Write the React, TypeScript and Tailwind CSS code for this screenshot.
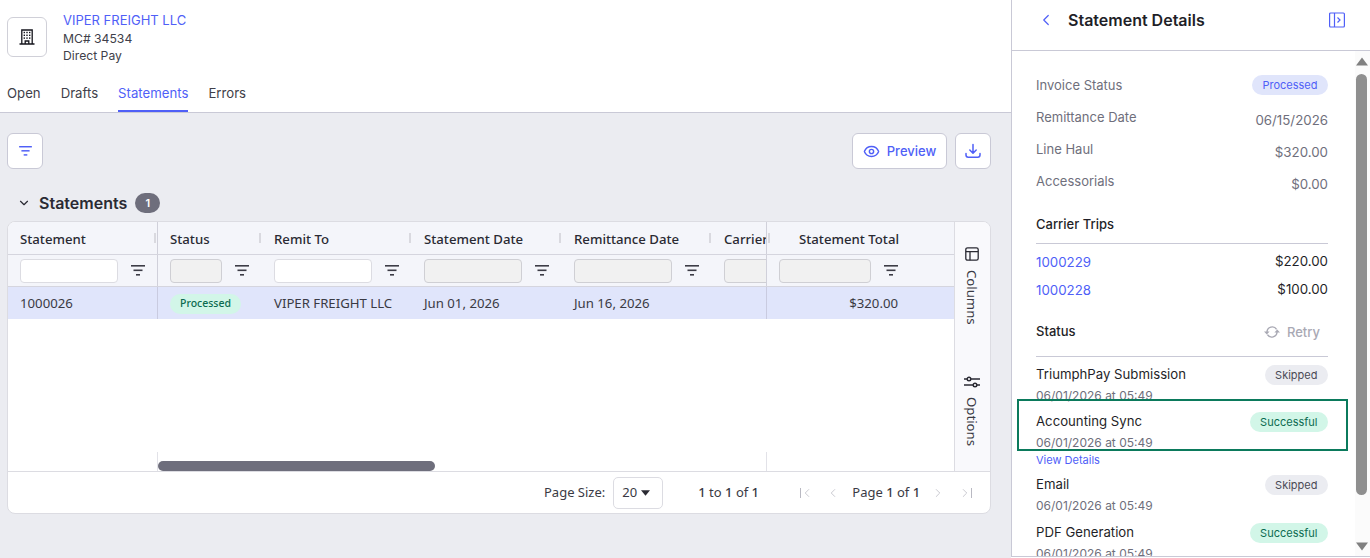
import { ChevronDown, ChevronLeft, ChevronRight, Eye } from "lucide-react";

const BLUE = "#4f5ff7";

function Lines({ color, className }: { color: string; className?: string }) {
  return (
    <svg viewBox="0 0 14 11" className={className} fill={color}>
      <rect x="0" y="0" width="14" height="1.6" />
      <rect x="2.5" y="4.5" width="9" height="1.6" />
      <rect x="5" y="9" width="4" height="1.6" />
    </svg>
  );
}

function Building() {
  return (
    <svg viewBox="0 0 16 16" className="h-[16px] w-[16px]" fill="none" stroke="#14141c" strokeWidth="1.3">
      <path d="M2.8 15V1h10.4v14" />
      <path d="M0.5 15h15" strokeWidth="1.5" />
      <path d="M6.2 15v-3h3.6v3" />
      <g fill="#14141c" stroke="none">
        <rect x="4.6" y="2.8" width="1.4" height="1.4" />
        <rect x="7.3" y="2.8" width="1.4" height="1.4" />
        <rect x="10" y="2.8" width="1.4" height="1.4" />
        <rect x="4.6" y="5.6" width="1.4" height="1.4" />
        <rect x="7.3" y="5.6" width="1.4" height="1.4" />
        <rect x="10" y="5.6" width="1.4" height="1.4" />
        <rect x="4.6" y="8.4" width="1.4" height="1.4" />
        <rect x="7.3" y="8.4" width="1.4" height="1.4" />
        <rect x="10" y="8.4" width="1.4" height="1.4" />
      </g>
    </svg>
  );
}

function HeaderCell({ w, label, pad = true }: { w: number; label: string; pad?: boolean }) {
  return (
    <div style={{ width: w }} className="relative flex h-full shrink-0 items-center whitespace-nowrap pl-[12px] pt-[4px] text-[13.2px] font-medium text-[#2a2a33]">
      {label}
      {pad && <span className="absolute right-[1px] top-[11px] h-[10px] w-[2px] bg-[#d9d9df]" />}
    </div>
  );
}

function FilterCell({ w, input = 98, enabled = false, left = 12 }: { w: number; input?: number; enabled?: boolean; left?: number }) {
  return (
    <div style={{ width: w, paddingLeft: left }} className="flex h-full shrink-0 items-center">
      <div
        style={{ width: input }}
        className={
          enabled
            ? "h-[24px] shrink-0 rounded-[4px] border border-[#dcdce2] bg-white"
            : "h-[24px] shrink-0 rounded-[4px] border border-[#cfcfd4] bg-[#f1f1f1]"
        }
      />
      <Lines color="#3c3c46" className="ml-[13px] h-[11px] w-[14px] shrink-0" />
    </div>
  );
}

function Badge({ tone, children }: { tone: "green" | "gray" | "blue"; children: string }) {
  const cls =
    tone === "green"
      ? "bg-[#d2f6e8] text-[#0c6b50]"
      : tone === "gray"
        ? "bg-[#ebecf1] text-[#4a4a55]"
        : "bg-[#e0e5fb] text-[#4f5ff7]";
  return <span className={`inline-flex h-[20px] items-center rounded-full px-[10.5px] text-[11px] ${cls}`}>{children}</span>;
}

function InfoRow({ label, value, badge }: { label: string; value?: string; badge?: boolean }) {
  return (
    <div className="flex h-[32px] items-start justify-between">
      <span className="text-[13px] leading-[20px] text-[#6f6f7c]">{label}</span>
      {badge ? (
        <span className="flex">
          <Badge tone="blue">Processed</Badge>
        </span>
      ) : (
        <span className="mt-[3px] text-[13.3px] leading-[20px] text-[#6f6f7c]">{value}</span>
      )}
    </div>
  );
}

function StatusRow({ name, tone, state }: { name: string; tone: "green" | "gray"; state: string }) {
  return (
    <div className="flex items-start justify-between">
      <div>
        <div className="text-[13.2px] leading-[20px] text-[#1f1f28]">{name}</div>
        <div className="mt-[2px] text-[12px] leading-[20px] text-[#6f6f7c]">06/01/2026 at 05:49</div>
      </div>
      <span className="mt-[1px] flex">
        <Badge tone={tone}>{state}</Badge>
      </span>
    </div>
  );
}

export default function App() {
  return (
    <div className="relative flex h-[558px] w-[1370px] overflow-hidden bg-white font-['Inter',sans-serif]">
      <main className="flex h-full w-[1011px] shrink-0 flex-col">
        <header className="h-[113px] shrink-0 border-b border-[#c9c9d6] bg-white px-[7px]">
          <div className="flex h-[79px] items-start">
            <div className="mt-[17px] flex h-[40px] w-[40px] items-center justify-center rounded-[6px] border border-[#d0d0d8]">
              <Building />
            </div>
            <div className="ml-[16px] mt-[12px] text-[12.2px] leading-[17.5px] text-[#3f3f4a]">
              <div className="text-[13px] text-[#4f5ff7]">VIPER FREIGHT LLC</div>
              <div>MC# 34534</div>
              <div>Direct Pay</div>
            </div>
          </div>
          <nav className="flex h-[33px] gap-[20px] text-[13.2px] text-[#3f3f4a]">
            <span className="pt-[4px] leading-[20px]">Open</span>
            <span className="pt-[4px] leading-[20px]">Drafts</span>
            <span className="h-[33px] border-b-2 border-[#4f5ff7] pt-[4px] leading-[20px] text-[#4f5ff7]">Statements</span>
            <span className="pt-[4px] leading-[20px]">Errors</span>
          </nav>
        </header>

        <section className="flex-1 bg-[#ebecf1] px-[7px] pt-[20px]">
          <div className="flex h-[36px] w-[984px] justify-between">
            <button className="flex h-[36px] w-[36px] items-center justify-center rounded-[6px] border border-[#c9c9d6] bg-white">
              <Lines color={BLUE} className="h-[10px] w-[13px]" />
            </button>
            <div className="flex gap-[8px]">
              <button className="flex h-[36px] w-[95px] items-center justify-center gap-[7px] rounded-[6px] border border-[#c9c9d6] bg-white text-[13px] font-medium text-[#4f5ff7]">
                <Eye size={17} strokeWidth={2} />
                <span className="mt-[2px]">Preview</span>
              </button>
              <button className="flex h-[36px] w-[36px] items-center justify-center rounded-[6px] border border-[#c9c9d6] bg-white">
                <svg viewBox="0 0 16 16" className="h-[16px] w-[16px]" fill="none" stroke={BLUE} strokeWidth="1.5" strokeLinecap="round" strokeLinejoin="round">
                  <path d="M8 1.5v8.5M4.8 7l3.2 3.2L11.2 7" />
                  <path d="M1 10.5v1.5c0 1.4.8 2.2 2.2 2.2h9.6c1.4 0 2.2-.8 2.2-2.2v-1.5" />
                </svg>
              </button>
            </div>
          </div>

          <div className="mt-[22px] flex h-[24px] items-center pl-[10px]">
            <ChevronDown size={14} strokeWidth={2} className="text-[#2a2a33]" />
            <span className="ml-[8px] text-[16px] font-semibold text-[#2a2a33]">Statements</span>
            <span className="ml-[8px] flex h-[20px] w-[25px] items-center justify-center rounded-full bg-[#6e6e7c] text-[11px] font-semibold text-white">1</span>
          </div>

          <div className="mt-[6px] flex h-[293px] w-[984px] flex-col overflow-hidden rounded-[8px] border border-[#dcdce2] bg-white font-['Noto_Sans',sans-serif]">
            <div className="flex h-[249px] shrink-0">
              <div className="flex flex-1 flex-col overflow-hidden">
                <div className="flex h-[33px] shrink-0 border-b border-[#d5d5de] bg-[#f4f5fa]">
                  <div className="flex w-[150px] shrink-0 border-r border-[#d0d0da]">
                    <HeaderCell w={149} label="Statement" />
                  </div>
                  <div className="flex w-[608px] shrink-0 overflow-hidden">
                    <HeaderCell w={104} label="Status" />
                    <HeaderCell w={150} label="Remit To" />
                    <HeaderCell w={150} label="Statement Date" />
                    <HeaderCell w={150} label="Remittance Date" />
                    <HeaderCell w={54} label="Carrier" pad={false} />
                  </div>
                  <div className="relative flex flex-1 items-center justify-end border-l border-[#d0d0da] pr-[55px] pt-[4px] text-[13.2px] font-medium text-[#2a2a33]">
                    <span className="absolute left-[1px] top-[11px] h-[10px] w-[2px] bg-[#d9d9df]" />
                    Statement Total
                  </div>
                </div>
                <div className="flex h-[32px] shrink-0 border-b border-[#d5d5de] bg-[#f4f5fa]">
                  <div className="flex w-[150px] shrink-0 border-r border-[#d0d0da]">
                    <FilterCell w={149} enabled />
                  </div>
                  <div className="flex w-[608px] shrink-0 overflow-hidden">
                    <FilterCell w={104} input={52} />
                    <FilterCell w={150} enabled />
                    <FilterCell w={150} />
                    <FilterCell w={150} />
                    <FilterCell w={150} />
                  </div>
                  <div className="flex flex-1 border-l border-[#d0d0da]">
                    <FilterCell w={187} input={92} />
                  </div>
                </div>
                <div className="flex h-[32px] shrink-0 bg-[#e0e5fb] pt-[0px] text-[13.2px] text-[#3a3a44]">
                  <div className="flex w-[150px] shrink-0 items-center border-r border-[#c9cbe0] pl-[12px] pt-[2px]">1000026</div>
                  <div className="flex w-[608px] shrink-0 items-center overflow-hidden pt-[2px]">
                    <div className="flex w-[104px] shrink-0 pl-[12px]">
                      <span className="inline-flex h-[20px] items-center rounded-full bg-[#d2f6e8] px-[10px] text-[10.5px] font-medium text-[#0c6b50]">Processed</span>
                    </div>
                    <div className="w-[150px] shrink-0 whitespace-nowrap pl-[12px]">VIPER FREIGHT LLC</div>
                    <div className="w-[150px] shrink-0 whitespace-nowrap pl-[12px]">Jun 01, 2026</div>
                    <div className="w-[150px] shrink-0 whitespace-nowrap pl-[12px]">Jun 16, 2026</div>
                  </div>
                  <div className="flex flex-1 items-center justify-end border-l border-[#c9cbe0] pr-[56px] pt-[2px]">$320.00</div>
                </div>
                <div className="flex-1" />
                <div className="flex h-[19px] shrink-0">
                  <div className="w-[150px] shrink-0 border-r border-[#e2e2e8]" />
                  <div className="w-[608px] shrink-0 pt-[9px]">
                    <div className="h-[10px] w-[277px] rounded-full bg-[#6e6e7c]" />
                  </div>
                  <div className="flex-1 border-l border-[#e2e2e8]" />
                </div>
              </div>
              <aside className="flex w-[36px] shrink-0 flex-col items-center border-l border-[#dcdce2] bg-[#f9f9fc] pr-[1px] text-[13.2px] text-[#3a3a44]">
                <svg viewBox="0 0 14 14" className="mt-[25px] h-[14px] w-[14px]" fill="none" stroke="#2a2a33" strokeWidth="1.3">
                  <rect x="0.8" y="0.8" width="12.4" height="12.4" rx="1.8" />
                  <path d="M0.8 4.6h12.4M5 4.6v8.6" />
                </svg>
                <span className="mt-[9px] leading-[16px] [writing-mode:vertical-rl]">Columns</span>
                <svg viewBox="0 0 16 12" className="mt-[51px] h-[12px] w-[16px]" fill="none" stroke="#2a2a33" strokeWidth="1.4">
                  <path d="M0 3h16M0 9h16" />
                  <circle cx="5" cy="3" r="1.8" fill="#f9f9fc" />
                  <circle cx="11" cy="9" r="1.8" fill="#f9f9fc" />
                </svg>
                <span className="mt-[9px] leading-[16px] [writing-mode:vertical-rl]">Options</span>
              </aside>
            </div>
            <footer className="flex h-[42px] items-center border-t border-[#dcdce2] text-[13px] text-[#3a3a44]">
              <span className="ml-[536px] whitespace-nowrap">Page Size:</span>
              <span className="ml-[8px] flex h-[32px] w-[50px] items-center rounded-[5px] border border-[#dcdce2] pl-[8px]">
                20
                <svg viewBox="0 0 10 6" className="ml-[4px] h-[6px] w-[9px]" fill="#2a2a33">
                  <path d="M0 0h10L5 6z" />
                </svg>
              </span>
              <span className="ml-[35px] w-[60px] whitespace-nowrap">
                <b className="font-medium">1</b> to <b className="font-medium">1</b> of <b className="font-medium">1</b>
              </span>
              <ChevronFirst />
              <ChevronLeft size={14} strokeWidth={1.3} className="ml-[12px] text-[#b9b9c2]" />
              <span className="ml-[12px] w-[65px] whitespace-nowrap">
                Page <b className="font-medium">1</b> of <b className="font-medium">1</b>
              </span>
              <ChevronRight size={14} strokeWidth={1.3} className="ml-[14px] text-[#b9b9c2]" />
              <ChevronLast />
            </footer>
          </div>
        </section>
      </main>

      <aside className="flex h-[557px] flex-1 flex-col border-b border-l border-[#c9c9d6] bg-white">
        <div className="flex h-[51px] shrink-0 items-start border-b border-[#c9c9d6] pl-[25px] pr-[25px]">
          <ChevronLeft size={18} strokeWidth={1.6} className="mt-[11px] text-[#4f5ff7]" />
          <h1 className="ml-[13px] mt-[9px] text-[16px] font-semibold leading-[22px] text-[#1f1f28]">Statement Details</h1>
          <svg viewBox="0 0 16 16" className="ml-auto mt-[12px] h-[16px] w-[16px]" fill="none" stroke={BLUE} strokeWidth="1.2">
            <rect x="0.6" y="1" width="14.8" height="14" rx="1" />
            <path d="M5.5 1v14" />
            <path d="M8.5 5.5L11 8l-2.5 2.5" />
          </svg>
        </div>
        <div className="flex min-h-0 flex-1">
          <div className="flex-1 overflow-hidden pl-[24px] pr-[27px] pt-[24px]">
            <InfoRow label="Invoice Status" badge />
            <InfoRow label="Remittance Date" value="06/15/2026" />
            <InfoRow label="Line Haul" value="$320.00" />
            <InfoRow label="Accessorials" value="$0.00" />

            <div className="mt-[11px] border-b border-[#c9c9d6] pb-[9px] text-[13px] font-medium leading-[20px] text-[#1f1f28]">Carrier Trips</div>
            <div className="mt-[9px] flex h-[20px] items-center justify-between text-[13.3px]">
              <span className="text-[#4f5ff7]">1000229</span>
              <span className="-mt-[2px] text-[#1f1f28]">$220.00</span>
            </div>
            <div className="mt-[8px] flex h-[20px] items-center justify-between text-[13.3px]">
              <span className="text-[#4f5ff7]">1000228</span>
              <span className="-mt-[2px] text-[#1f1f28]">$100.00</span>
            </div>
            <div className="mt-[20px] flex h-[35px] items-start justify-between text-[13px] leading-[20px]">
              <span className="font-medium text-[#1f1f28]">Status</span>
              <span className="mr-[8px] mt-[1px] flex items-center gap-[7px] text-[#a9a9b4]">
                <svg viewBox="0 0 16 16" className="h-[16px] w-[16px]" fill="none" stroke="#a9a9b4" strokeWidth="1.4">
                  <path d="M3 8a5.2 5.2 0 0 1 9.6-2.6" />
                  <path d="M13 8a5.2 5.2 0 0 1-9.6 2.6" />
                  <path d="M0 7.4h5.6L2.8 10.6zM16 8.6h-5.6l2.8-3.2z" fill="#a9a9b4" stroke="none" />
                </svg>
                <span className="font-medium">Retry</span>
              </span>
            </div>
            <div className="border-b border-[#c9c9d6]" />
            <div className="pt-[7px]">
              <StatusRow name="TriumphPay Submission" tone="gray" state="Skipped" />
            </div>
            <div className="pt-[5px]">
              <StatusRow name="Accounting Sync" tone="green" state="Successful" />
            </div>
            <div className="h-[15px] text-[11px] leading-[15px] text-[#4f5ff7]">View Details</div>
            <div className="pt-[6px]">
              <StatusRow name="Email" tone="gray" state="Skipped" />
            </div>
            <div className="pt-[6px]">
              <StatusRow name="PDF Generation" tone="green" state="Successful" />
            </div>
          </div>
          <div className="flex w-[15px] shrink-0 flex-col items-center bg-[#fbfbfb] pl-[1px] pr-[3px]">
            <svg viewBox="0 0 12 8" className="mt-[6px] h-[9px] w-[12px] shrink-0" fill="#808080">
              <path d="M6 0l6 8H0z" />
            </svg>
            <div className="mt-[8px] h-[421px] w-[11px] shrink-0 rounded-full bg-[#8f8f8f]" />
            <div className="flex-1" />
            <svg viewBox="0 0 12 8" className="mb-[5px] h-[9px] w-[12px] shrink-0" fill="#808080">
              <path d="M6 8L0 0h12z" />
            </svg>
          </div>
        </div>
      </aside>

      <div className="absolute left-[1017px] top-[399px] h-[52px] w-[331px] border-2 border-[#0b7a5c]" />
    </div>
  );
}

function ChevronFirst() {
  return (
    <span className="ml-[42px] flex items-center text-[#b9b9c2]">
      <span className="h-[10px] w-[1px] bg-[#b9b9c2]" />
      <ChevronLeft size={14} strokeWidth={1.3} className="-ml-[1px]" />
    </span>
  );
}

function ChevronLast() {
  return (
    <span className="ml-[13px] flex items-center text-[#b9b9c2]">
      <ChevronRight size={14} strokeWidth={1.3} />
      <span className="-ml-[1px] h-[10px] w-[1px] bg-[#b9b9c2]" />
    </span>
  );
}
